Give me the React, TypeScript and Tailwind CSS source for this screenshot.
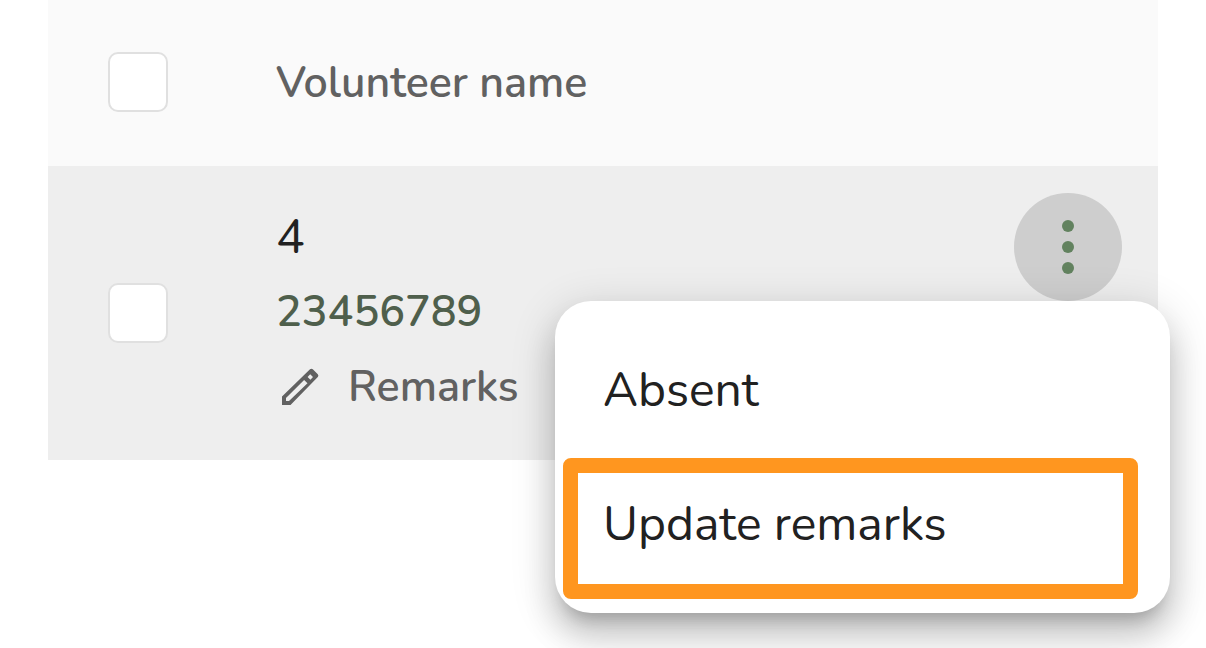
import clsx from 'clsx';
import { useState } from 'react';
import type { FC, ReactNode } from 'react';

type Volunteer = { name: string; phone: string };

const volunteers: Volunteer[] = [{ name: '4', phone: '23456789' }];

const PencilIcon: FC = () => (
  <svg width="48" height="48" viewBox="-1 0 48 48" fill="#616161" aria-hidden="true">
    <path
      fillRule="evenodd"
      d="M5 42v-8.5L33 6.3q1.400-1.200 2.800 0l5 5q1.200 1.400 0 2.800L13.500 42zM9 38h3L30.500 20.300l-3.400-3.400L9 35zM33.200 11.300l-2.600 2.600 2.800 2.800 2.600-2.600z"
    />
  </svg>
);

const DotsIcon: FC = () => (
  <svg width="72" height="72" viewBox="0 0 24 24" fill="#62825f" aria-hidden="true">
    <circle cx="12" cy="5" r="2" />
    <circle cx="12" cy="12" r="2" />
    <circle cx="12" cy="19" r="2" />
  </svg>
);

const Checkbox: FC<{ label: string }> = ({ label }) => (
  <input
    type="checkbox"
    aria-label={label}
    className="block size-15 appearance-none rounded-[10px] border-2 border-[#e0e0e0] bg-white checked:bg-[#62825f]"
  />
);

const MenuItem: FC<{ highlighted?: boolean; children: ReactNode }> = ({
  highlighted,
  children,
}) => (
  <button
    type="button"
    role="menuitem"
    className="relative block h-[134px] w-full px-12 text-left text-5xl text-[#212121]"
  >
    {children}
    {highlighted && (
      <span className="absolute top-px right-8 -bottom-2 left-2 rounded-lg border-15 border-[#ff961f]" />
    )}
  </button>
);

const RowMenu: FC = () => {
  const [open, setOpen] = useState(true);

  return (
    <div className="relative size-27">
      <button
        type="button"
        aria-label="More actions"
        aria-expanded={open}
        onClick={() => setOpen(!open)}
        className={clsx(
          'flex size-27 items-center justify-center rounded-full',
          open && 'bg-[#cecece]',
        )}
      >
        <DotsIcon />
      </button>
      {open && (
        <div
          role="menu"
          className="absolute top-full -right-12 w-[615px] rounded-[36px] bg-white py-[22px] shadow-[0_15px_15px_-9px_rgba(0,0,0,0.2),0_24px_30px_3px_rgba(0,0,0,0.14),0_9px_42px_6px_rgba(0,0,0,0.12)]"
        >
          <MenuItem>Absent</MenuItem>
          <MenuItem highlighted>Update remarks</MenuItem>
        </div>
      )}
    </div>
  );
};

export default function App() {
  return (
    <main className="min-h-screen overflow-hidden bg-white px-12 font-[Nunito,Lato,sans-serif] antialiased">
      <table className="w-full table-fixed text-left">
        <thead className="bg-[#fafafa]">
          <tr className="h-[166px]">
            <th className="w-[228px] pb-0.5 pl-15">
              <Checkbox label="Select all volunteers" />
            </th>
            <th className="text-[43px] font-semibold text-[#616161]">Volunteer name</th>
            <th className="w-36" aria-label="Actions" />
          </tr>
        </thead>
        <tbody className="bg-[#eeeeee]">
          {volunteers.map((volunteer) => (
            <tr key={volunteer.phone} className="h-[294px]">
              <td className="pl-15">
                <Checkbox label={`Select ${volunteer.name}`} />
              </td>
              <td className="pb-0.5 text-[43px] leading-[75px] font-semibold text-[#616161]">
                <div className="text-5xl leading-[75px] font-normal text-[#212121]">
                  {volunteer.name}
                </div>
                <a href={`tel:${volunteer.phone}`} className="block text-[#4f5f4c]">
                  {volunteer.phone}
                </a>
                <div className="flex items-center gap-6">
                  <PencilIcon />
                  Remarks
                </div>
              </td>
              <td className="pt-[27px] align-top">
                <RowMenu />
              </td>
            </tr>
          ))}
        </tbody>
      </table>
    </main>
  );
}
